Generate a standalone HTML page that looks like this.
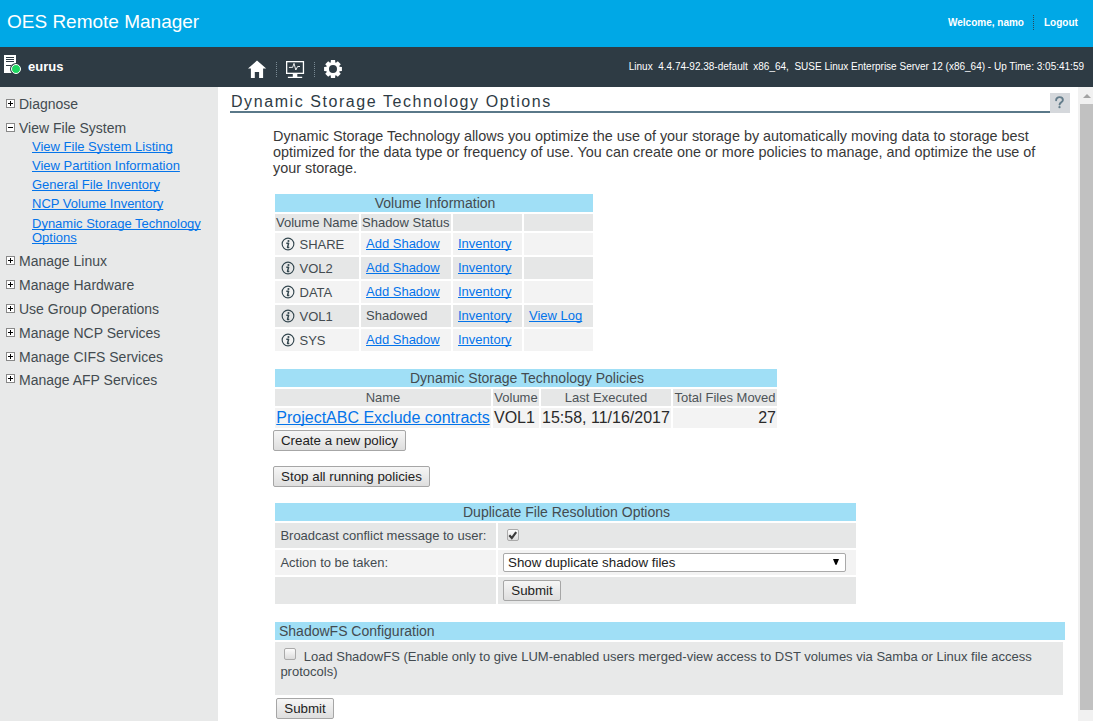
<!DOCTYPE html>
<html><head><meta charset="utf-8"><style>
html,body{margin:0;padding:0;width:1093px;height:721px;overflow:hidden;background:#fff}
body{position:relative;font-family:"Liberation Sans",sans-serif}
body>div,body>svg{position:absolute;white-space:nowrap}
.u{text-decoration:underline;text-decoration-skip-ink:none}
.btn{border:1px solid #a6a6a6;border-radius:2px;background:linear-gradient(#f6f6f6,#dedede);font-size:13.333px;color:#222;text-align:center}
</style></head><body>
<div style="left:0px;top:0px;width:1093px;height:47px;background:#00a8e6;"></div>
<div style="left:7px;top:11.92px;font-size:19px;line-height:19px;color:#fff;">OES Remote Manager</div>
<div style="left:948px;top:18.23px;font-size:10px;line-height:10px;color:#fff;font-weight:bold">Welcome, namo</div>
<div style="left:1033px;top:15px;width:0;height:15px;border-left:1px dotted #2a4a5a"></div>
<div style="left:1044px;top:18.23px;font-size:10px;line-height:10px;color:#fff;font-weight:bold">Logout</div>
<div style="left:0px;top:47px;width:1093px;height:40px;background:#2e3b44;"></div>
<div style="left:4px;top:55px;width:12px;height:18px;background:#fff;"></div>
<div style="left:6px;top:57px;width:8px;height:1px;background:#2e3b44;"></div>
<div style="left:6px;top:59px;width:8px;height:1px;background:#2e3b44;"></div>
<div style="left:6px;top:61px;width:8px;height:1px;background:#2e3b44;"></div>
<div style="left:6px;top:65px;width:5px;height:1px;background:#2e3b44;"></div>
<div style="left:11px;top:63.7px;width:8.2px;height:8.2px;border-radius:50%;background:#1ed760;border:1px solid #fff;box-shadow:0 0 0 1px #2e3b44"></div>
<div style="left:28px;top:59.80px;font-size:13px;line-height:13px;color:#fff;font-weight:bold">eurus</div>
<svg style="left:246px;top:59px" width="22" height="21" viewBox="0 0 22 21"><path d="M11 1.6 L2 9.6 L4.9 9.6 L4.9 19 L8.8 19 L8.8 13.1 L13.1 13.1 L13.1 19 L17.1 19 L17.1 9.6 L20.2 9.6 Z" fill="#fff"/></svg>
<div style="left:276px;top:62px;width:0;height:15px;border-left:1px dotted #7a8a94"></div>
<svg style="left:282px;top:56px" width="26" height="26" viewBox="282 56 26 26"><rect x="286.65" y="61.65" width="16.8" height="11.7" fill="none" stroke="#fff" stroke-width="1.3"/><path d="M292.8 73.9 h4.5 v3 h-4.5z M287.9 76.8 h14.3 v1.3 h-14.3z" fill="#fff"/><path d="M288.9 67.4 H292.6 L294 63.4 L295.8 70 L297.6 66.5 L300 66.5" fill="none" stroke="#fff" stroke-width="1" stroke-linejoin="round" opacity="0.9"/></svg>
<div style="left:314px;top:62px;width:0;height:15px;border-left:1px dotted #7a8a94"></div>
<svg style="left:323px;top:59px" width="20" height="20" viewBox="0 0 20 20"><path d="M7.70 3.49 L7.91 1.09 L12.09 1.09 L12.30 3.49 L12.97 3.77 L14.82 2.23 L17.77 5.18 L16.23 7.03 L16.51 7.70 L18.91 7.91 L18.91 12.09 L16.51 12.30 L16.23 12.97 L17.77 14.82 L14.82 17.77 L12.97 16.23 L12.30 16.51 L12.09 18.91 L7.91 18.91 L7.70 16.51 L7.03 16.23 L5.18 17.77 L2.23 14.82 L3.77 12.97 L3.49 12.30 L1.09 12.09 L1.09 7.91 L3.49 7.70 L3.77 7.03 L2.23 5.18 L5.18 2.23 L7.03 3.77Z M10 6 A4 4 0 1 0 10 14 A4 4 0 1 0 10 6Z" fill="#fff" fill-rule="evenodd"/></svg>
<div style="right:9px;top:61.53px;font-size:10px;line-height:10px;color:#fff;text-align:right;">Linux&nbsp; 4.4.74-92.38-default&nbsp; x86_64,&nbsp; SUSE Linux Enterprise Server 12 (x86_64) - Up Time: 3:05:41:59</div>
<div style="left:0px;top:87px;width:218px;height:634px;background:#e8e9e9;"></div>
<div style="left:6px;top:99px;width:7px;height:7px;border:1px solid #888;background:#fff"></div>
<div style="left:8px;top:103px;width:5px;height:1px;background:#000"></div>
<div style="left:10px;top:101px;width:1px;height:5px;background:#000"></div>
<div style="left:19px;top:96.85px;font-size:14px;line-height:14px;color:#434b50;">Diagnose</div>
<div style="left:6px;top:123px;width:7px;height:7px;border:1px solid #888;background:#fff"></div>
<div style="left:8px;top:127px;width:5px;height:1px;background:#000"></div>
<div style="left:19px;top:121.45px;font-size:14px;line-height:14px;color:#434b50;">View File System</div>
<div class="u" style="left:32px;top:139.50px;font-size:13px;line-height:13px;color:#0474ea;">View File System Listing</div>
<div class="u" style="left:32px;top:158.80px;font-size:13px;line-height:13px;color:#0474ea;">View Partition Information</div>
<div class="u" style="left:32px;top:177.60px;font-size:13px;line-height:13px;color:#0474ea;">General File Inventory</div>
<div class="u" style="left:32px;top:196.60px;font-size:13px;line-height:13px;color:#0474ea;">NCP Volume Inventory</div>
<div class="u" style="left:32px;top:217.40px;font-size:13px;line-height:13px;color:#0474ea;">Dynamic Storage Technology</div>
<div class="u" style="left:32px;top:231.10px;font-size:13px;line-height:13px;color:#0474ea;">Options</div>
<div style="left:6px;top:256px;width:7px;height:7px;border:1px solid #888;background:#fff"></div>
<div style="left:8px;top:260px;width:5px;height:1px;background:#000"></div>
<div style="left:10px;top:258px;width:1px;height:5px;background:#000"></div>
<div style="left:19px;top:253.65px;font-size:14px;line-height:14px;color:#434b50;">Manage Linux</div>
<div style="left:6px;top:280px;width:7px;height:7px;border:1px solid #888;background:#fff"></div>
<div style="left:8px;top:284px;width:5px;height:1px;background:#000"></div>
<div style="left:10px;top:282px;width:1px;height:5px;background:#000"></div>
<div style="left:19px;top:277.65px;font-size:14px;line-height:14px;color:#434b50;">Manage Hardware</div>
<div style="left:6px;top:304px;width:7px;height:7px;border:1px solid #888;background:#fff"></div>
<div style="left:8px;top:308px;width:5px;height:1px;background:#000"></div>
<div style="left:10px;top:306px;width:1px;height:5px;background:#000"></div>
<div style="left:19px;top:301.65px;font-size:14px;line-height:14px;color:#434b50;">Use Group Operations</div>
<div style="left:6px;top:328px;width:7px;height:7px;border:1px solid #888;background:#fff"></div>
<div style="left:8px;top:332px;width:5px;height:1px;background:#000"></div>
<div style="left:10px;top:330px;width:1px;height:5px;background:#000"></div>
<div style="left:19px;top:325.65px;font-size:14px;line-height:14px;color:#434b50;">Manage NCP Services</div>
<div style="left:6px;top:352px;width:7px;height:7px;border:1px solid #888;background:#fff"></div>
<div style="left:8px;top:356px;width:5px;height:1px;background:#000"></div>
<div style="left:10px;top:354px;width:1px;height:5px;background:#000"></div>
<div style="left:19px;top:349.65px;font-size:14px;line-height:14px;color:#434b50;">Manage CIFS Services</div>
<div style="left:6px;top:374px;width:7px;height:7px;border:1px solid #888;background:#fff"></div>
<div style="left:8px;top:378px;width:5px;height:1px;background:#000"></div>
<div style="left:10px;top:376px;width:1px;height:5px;background:#000"></div>
<div style="left:19px;top:372.65px;font-size:14px;line-height:14px;color:#434b50;">Manage AFP Services</div>
<div style="left:1078px;top:87px;width:15px;height:634px;background:#f1f1f1;"></div>
<div style="left:1080px;top:104px;width:13px;height:606px;background:#c1c1c1;"></div>
<div style="left:1082.5px;top:94px;width:0;height:0;border-left:4px solid transparent;border-right:4px solid transparent;border-bottom:4px solid #a3a3a3"></div>
<div style="left:231px;top:94.16px;font-size:16px;line-height:16px;color:#2e3b44;letter-spacing:1.57px">Dynamic Storage Technology Options</div>
<div style="left:230px;top:111px;width:820px;height:2px;background:#5a7889;"></div>
<div style="left:1050px;top:93px;width:20px;height:20px;background:#d5d8dc;"></div>
<svg style="left:1050px;top:93px" width="20" height="20" viewBox="0 0 20 20"><path d="M6.1 7.3 C6.1 5.2 7.7 4.1 9.6 4.1 C11.5 4.1 12.9 5.3 12.9 7 C12.9 9 10.1 9.5 9.6 11.5" fill="none" stroke="#647d8b" stroke-width="1.9" stroke-linecap="round"/><circle cx="9.5" cy="14.2" r="1.15" fill="#647d8b"/></svg>
<div style="left:273px;top:128.81px;font-size:14.4px;line-height:14.4px;color:#383838;">Dynamic Storage Technology allows you optimize the use of your storage by automatically moving data to storage best</div>
<div style="left:273px;top:144.81px;font-size:14.4px;line-height:14.4px;color:#383838;">optimized for the data type or frequency of use. You can create one or more policies to manage, and optimize the use of</div>
<div style="left:273px;top:160.81px;font-size:14.4px;line-height:14.4px;color:#383838;">your storage.</div>
<div style="left:275px;top:194px;width:318px;height:18px;background:#a0dff6;"></div>
<div style="left:276px;width:318px;text-align:center;top:196.15px;font-size:14px;line-height:14px;color:#434b50;">Volume Information</div>
<div style="left:275px;top:214px;width:84px;height:17px;background:#e6e7e7;"></div>
<div style="left:361px;top:214px;width:90px;height:17px;background:#e6e7e7;"></div>
<div style="left:453px;top:214px;width:69px;height:17px;background:#e6e7e7;"></div>
<div style="left:524px;top:214px;width:69px;height:17px;background:#e6e7e7;"></div>
<div style="left:276px;top:216.00px;font-size:13px;line-height:13px;color:#434b50;">Volume Name</div>
<div style="left:362px;top:216.00px;font-size:13px;line-height:13px;color:#434b50;">Shadow Status</div>
<div style="left:275px;top:233px;width:84px;height:22px;background:#f3f3f3;"></div>
<div style="left:361px;top:233px;width:90px;height:22px;background:#f3f3f3;"></div>
<div style="left:453px;top:233px;width:69px;height:22px;background:#f3f3f3;"></div>
<div style="left:524px;top:233px;width:69px;height:22px;background:#f3f3f3;"></div>
<div style="left:281px;top:237px;width:14px;height:14px"><svg width="14" height="14" viewBox="0 0 14 14"><circle cx="7" cy="7" r="5.85" fill="none" stroke="#34474f" stroke-width="1.15"/><circle cx="7.45" cy="3.95" r="1.05" fill="#34474f"/><path d="M5.3 6.3 H7.6 L6.5 10.5 H8.3" fill="none" stroke="#34474f" stroke-width="1.45" stroke-linejoin="round"/></svg></div>
<div style="left:299.5px;top:238.00px;font-size:13px;line-height:13px;color:#434b50;">SHARE</div>
<div class="u" style="left:366px;top:237.00px;font-size:13px;line-height:13px;color:#0474ea;">Add Shadow</div>
<div class="u" style="left:458px;top:237.00px;font-size:13px;line-height:13px;color:#0474ea;">Inventory</div>
<div style="left:275px;top:257px;width:84px;height:22px;background:#e6e7e7;"></div>
<div style="left:361px;top:257px;width:90px;height:22px;background:#e6e7e7;"></div>
<div style="left:453px;top:257px;width:69px;height:22px;background:#e6e7e7;"></div>
<div style="left:524px;top:257px;width:69px;height:22px;background:#e6e7e7;"></div>
<div style="left:281px;top:261px;width:14px;height:14px"><svg width="14" height="14" viewBox="0 0 14 14"><circle cx="7" cy="7" r="5.85" fill="none" stroke="#34474f" stroke-width="1.15"/><circle cx="7.45" cy="3.95" r="1.05" fill="#34474f"/><path d="M5.3 6.3 H7.6 L6.5 10.5 H8.3" fill="none" stroke="#34474f" stroke-width="1.45" stroke-linejoin="round"/></svg></div>
<div style="left:299.5px;top:262.00px;font-size:13px;line-height:13px;color:#434b50;">VOL2</div>
<div class="u" style="left:366px;top:261.00px;font-size:13px;line-height:13px;color:#0474ea;">Add Shadow</div>
<div class="u" style="left:458px;top:261.00px;font-size:13px;line-height:13px;color:#0474ea;">Inventory</div>
<div style="left:275px;top:281px;width:84px;height:22px;background:#f3f3f3;"></div>
<div style="left:361px;top:281px;width:90px;height:22px;background:#f3f3f3;"></div>
<div style="left:453px;top:281px;width:69px;height:22px;background:#f3f3f3;"></div>
<div style="left:524px;top:281px;width:69px;height:22px;background:#f3f3f3;"></div>
<div style="left:281px;top:285px;width:14px;height:14px"><svg width="14" height="14" viewBox="0 0 14 14"><circle cx="7" cy="7" r="5.85" fill="none" stroke="#34474f" stroke-width="1.15"/><circle cx="7.45" cy="3.95" r="1.05" fill="#34474f"/><path d="M5.3 6.3 H7.6 L6.5 10.5 H8.3" fill="none" stroke="#34474f" stroke-width="1.45" stroke-linejoin="round"/></svg></div>
<div style="left:299.5px;top:286.00px;font-size:13px;line-height:13px;color:#434b50;">DATA</div>
<div class="u" style="left:366px;top:285.00px;font-size:13px;line-height:13px;color:#0474ea;">Add Shadow</div>
<div class="u" style="left:458px;top:285.00px;font-size:13px;line-height:13px;color:#0474ea;">Inventory</div>
<div style="left:275px;top:305px;width:84px;height:22px;background:#e6e7e7;"></div>
<div style="left:361px;top:305px;width:90px;height:22px;background:#e6e7e7;"></div>
<div style="left:453px;top:305px;width:69px;height:22px;background:#e6e7e7;"></div>
<div style="left:524px;top:305px;width:69px;height:22px;background:#e6e7e7;"></div>
<div style="left:281px;top:309px;width:14px;height:14px"><svg width="14" height="14" viewBox="0 0 14 14"><circle cx="7" cy="7" r="5.85" fill="none" stroke="#34474f" stroke-width="1.15"/><circle cx="7.45" cy="3.95" r="1.05" fill="#34474f"/><path d="M5.3 6.3 H7.6 L6.5 10.5 H8.3" fill="none" stroke="#34474f" stroke-width="1.45" stroke-linejoin="round"/></svg></div>
<div style="left:299.5px;top:310.00px;font-size:13px;line-height:13px;color:#434b50;">VOL1</div>
<div style="left:366px;top:309.00px;font-size:13px;line-height:13px;color:#434b50;">Shadowed</div>
<div class="u" style="left:458px;top:309.00px;font-size:13px;line-height:13px;color:#0474ea;">Inventory</div>
<div class="u" style="left:529px;top:309.00px;font-size:13px;line-height:13px;color:#0474ea;">View Log</div>
<div style="left:275px;top:329px;width:84px;height:22px;background:#f3f3f3;"></div>
<div style="left:361px;top:329px;width:90px;height:22px;background:#f3f3f3;"></div>
<div style="left:453px;top:329px;width:69px;height:22px;background:#f3f3f3;"></div>
<div style="left:524px;top:329px;width:69px;height:22px;background:#f3f3f3;"></div>
<div style="left:281px;top:333px;width:14px;height:14px"><svg width="14" height="14" viewBox="0 0 14 14"><circle cx="7" cy="7" r="5.85" fill="none" stroke="#34474f" stroke-width="1.15"/><circle cx="7.45" cy="3.95" r="1.05" fill="#34474f"/><path d="M5.3 6.3 H7.6 L6.5 10.5 H8.3" fill="none" stroke="#34474f" stroke-width="1.45" stroke-linejoin="round"/></svg></div>
<div style="left:299.5px;top:334.00px;font-size:13px;line-height:13px;color:#434b50;">SYS</div>
<div class="u" style="left:366px;top:333.00px;font-size:13px;line-height:13px;color:#0474ea;">Add Shadow</div>
<div class="u" style="left:458px;top:333.00px;font-size:13px;line-height:13px;color:#0474ea;">Inventory</div>
<div style="left:275px;top:369px;width:502px;height:18px;background:#a0dff6;"></div>
<div style="left:276px;width:502px;text-align:center;top:371.15px;font-size:14px;line-height:14px;color:#434b50;">Dynamic Storage Technology Policies</div>
<div style="left:275px;top:389px;width:216px;height:17px;background:#e6e7e7;"></div>
<div style="left:493px;top:389px;width:46px;height:17px;background:#e6e7e7;"></div>
<div style="left:541px;top:389px;width:130px;height:17px;background:#e6e7e7;"></div>
<div style="left:673px;top:389px;width:104px;height:17px;background:#e6e7e7;"></div>
<div style="left:275px;width:216px;text-align:center;top:391.00px;font-size:13px;line-height:13px;color:#4d5357;">Name</div>
<div style="left:493px;width:46px;text-align:center;top:391.00px;font-size:13px;line-height:13px;color:#4d5357;">Volume</div>
<div style="left:541px;width:130px;text-align:center;top:391.00px;font-size:13px;line-height:13px;color:#4d5357;">Last Executed</div>
<div style="left:673px;width:104px;text-align:center;top:391.00px;font-size:13px;line-height:13px;color:#4d5357;">Total Files Moved</div>
<div style="left:275px;top:408px;width:216px;height:20px;background:#f3f3f3;"></div>
<div style="left:493px;top:408px;width:46px;height:20px;background:#f3f3f3;"></div>
<div style="left:541px;top:408px;width:130px;height:20px;background:#f3f3f3;"></div>
<div style="left:673px;top:408px;width:104px;height:20px;background:#f3f3f3;"></div>
<div class="u" style="left:276.3px;top:410.46px;font-size:16px;line-height:16px;color:#0474ea;">ProjectABC Exclude contracts</div>
<div style="left:494px;top:410.46px;font-size:16px;line-height:16px;color:#2a2a2a;">VOL1</div>
<div style="left:542px;top:410.46px;font-size:16px;line-height:16px;color:#2a2a2a;">15:58, 11/16/2017</div>
<div style="right:317px;top:410.46px;font-size:16px;line-height:16px;color:#2a2a2a;text-align:right;">27</div>
<div class="btn" style="left:273px;top:430px;width:131px;height:19px;line-height:19px">Create a new policy</div>
<div class="btn" style="left:273px;top:466px;width:155px;height:19px;line-height:19px">Stop all running policies</div>
<div style="left:275px;top:503px;width:581px;height:18px;background:#a0dff6;"></div>
<div style="left:276px;width:581px;text-align:center;top:505.15px;font-size:14px;line-height:14px;color:#434b50;">Duplicate File Resolution Options</div>
<div style="left:275px;top:523px;width:221px;height:25px;background:#e6e7e7;"></div>
<div style="left:498px;top:523px;width:358px;height:25px;background:#e6e7e7;"></div>
<div style="left:275px;top:550px;width:221px;height:25px;background:#f3f3f3;"></div>
<div style="left:498px;top:550px;width:358px;height:25px;background:#f3f3f3;"></div>
<div style="left:275px;top:577px;width:221px;height:27px;background:#e6e7e7;"></div>
<div style="left:498px;top:577px;width:358px;height:27px;background:#e6e7e7;"></div>
<div style="left:280.4px;top:529.00px;font-size:13px;line-height:13px;color:#434b50;">Broadcast conflict message to user:</div>
<div style="left:280.4px;top:556.00px;font-size:13px;line-height:13px;color:#434b50;">Action to be taken:</div>
<div style="left:507px;top:529px;width:10px;height:10px;border:1px solid #aaa;border-radius:2px;background:linear-gradient(#fcfcfc,#dcdcdc)"></div>
<svg style="left:507px;top:529px" width="12" height="12" viewBox="0 0 12 12"><path d="M2.3 6.3 L4.8 9.1 L9.2 3.2" fill="none" stroke="#3a3a3a" stroke-width="2.2"/></svg>
<div style="left:503px;top:553px;width:341px;height:17px;border:1px solid #a9a9a9;border-radius:2px;background:#fff"></div>
<div style="left:508px;top:555.71px;font-size:13.333px;line-height:13.333px;color:#222;">Show duplicate shadow files</div>
<svg style="left:832px;top:558px" width="8" height="8" viewBox="0 0 8 8"><path d="M1 1 H7 L4.6 6.7 H3.4 Z" fill="#000"/></svg>
<div class="btn" style="left:503px;top:580px;width:56px;height:19px;line-height:19px">Submit</div>
<div style="left:275px;top:622px;width:790px;height:18px;background:#a0dff6;"></div>
<div style="left:279px;top:624.15px;font-size:14px;line-height:14px;color:#434b50;">ShadowFS Configuration</div>
<div style="left:275px;top:642px;width:788px;height:53px;background:#e8e9e9;"></div>
<div style="left:284px;top:648px;width:10px;height:10px;border:1px solid #aaa;border-radius:2px;background:linear-gradient(#fcfcfc,#dcdcdc)"></div>
<div style="left:303.7px;top:650.00px;font-size:13px;line-height:13px;color:#434b50;">Load ShadowFS (Enable only to give LUM-enabled users merged-view access to DST volumes via Samba or Linux file access</div>
<div style="left:280.4px;top:665.00px;font-size:13px;line-height:13px;color:#434b50;">protocols)</div>
<div class="btn" style="left:276px;top:698px;width:56px;height:19px;line-height:19px">Submit</div>
</body></html>
